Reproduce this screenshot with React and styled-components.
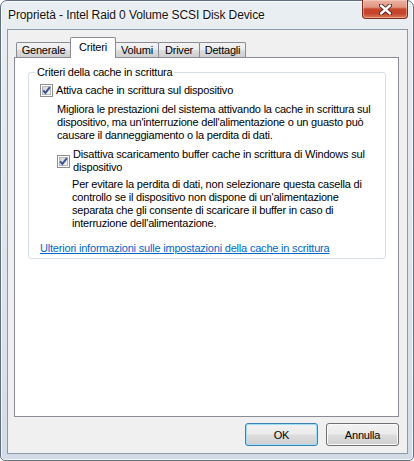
import * as React from "react"
import styled, { createGlobalStyle } from "styled-components"

const GlobalStyle = createGlobalStyle`
  html, body {
    margin: 0;
    padding: 0;
    background: #ffffff;
  }
  body {
    font-family: "Liberation Sans", Arial, sans-serif;
    font-size: 11px;
    letter-spacing: -0.2px;
    color: #000;
  }
`

const Window = styled.div`
  box-sizing: border-box;
  width: 414px;
  height: 461px;
  display: flex;
  flex-direction: column;
  padding: 0 5px 6px 6px;
  border: 1px solid #5f6e80;
  border-radius: 7px 7px 5px 5px;
  background: linear-gradient(180deg, #e9eef3 0%, #e2e8ee 35%, #dbe3ea 70%, #d3dce6 100%);
  box-shadow: inset 0 0 0 1px rgba(255, 255, 255, 0.75);
`

const TitleBar = styled.div`
  height: 28px;
  display: flex;
  align-items: flex-start;
`

const Title = styled.div`
  padding: 7px 0 0 1px;
  font-size: 12px;
  letter-spacing: -0.1px;
  line-height: 15px;
  color: #111;
  text-shadow: 0 0 6px #fff, 0 0 3px #fff;
`

const CloseButton = styled.div`
  margin-left: auto;
  margin-top: -1px;
  width: 46px;
  height: 19px;
  box-sizing: border-box;
  display: flex;
  align-items: center;
  justify-content: center;
  border: 1px solid #7a2c1e;
  border-top: none;
  border-radius: 0 0 4px 4px;
  background: linear-gradient(180deg, #eab2a4 0%, #e19680 40%, #c8472c 50%, #c4452b 75%, #dc7c58 100%);
  box-shadow: inset 0 0 0 1px rgba(255, 220, 205, 0.45);
`

const Client = styled.div`
  flex: 1;
  display: flex;
  flex-direction: column;
  padding: 7px 8px 7px 6px;
  border: 1px solid #8d9aab;
  background: #f0f0f0;
`

const TabStrip = styled.div`
  display: flex;
  align-items: flex-end;
  padding-left: 2px;
`

const Tab = styled.div`
  box-sizing: border-box;
  width: ${p => p.$w}px;
  height: ${p => (p.$active ? 21 : 15)}px;
  margin-left: -1px;
  margin-bottom: ${p => (p.$active ? -1 : 0)}px;
  padding-top: ${p => (p.$active ? 2 : 0)}px;
  position: relative;
  z-index: ${p => (p.$active ? 2 : 1)};
  border: 1px solid #898c95;
  border-bottom: none;
  border-radius: 2px 2px 0 0;
  background: ${p =>
    p.$active ? "#ffffff" : "linear-gradient(180deg, #f3f3f3 0%, #ebebeb 50%, #dddddd 51%, #cfcfcf 100%)"};
  text-align: center;
  line-height: 14px;
  &:first-child {
    margin-left: 0;
  }
`

const Panel = styled.div`
  flex: 1;
  display: flex;
  flex-direction: column;
  border: 1px solid #898c95;
  background: #ffffff;
`

const Group = styled.fieldset`
  margin: 8px 12px 0 13px;
  padding: 5px 10px 3px 11px;
  min-width: 0;
  border: 1px solid #d5dfe5;
  border-radius: 3px;
`

const Legend = styled.legend`
  margin-left: -5px;
  padding: 0 2px;
  line-height: 13px;
`

const CheckRow = styled.label`
  display: flex;
  align-items: center;
  gap: 3px;
  margin-left: ${p => p.$indent || 0}px;
  margin-top: ${p => p.$top || 0}px;
  line-height: 13px;
  white-space: nowrap;
`

const Text = styled.p`
  margin: ${p => p.$top || 0}px 0 0 ${p => p.$indent || 0}px;
  line-height: 13px;
  white-space: nowrap;
`

const Link = styled.a`
  display: block;
  margin-top: 12px;
  line-height: 13px;
  color: #0066cc;
  text-decoration: underline;
`

const ButtonRow = styled.div`
  display: flex;
  justify-content: flex-end;
  gap: 8px;
  margin-top: 6px;
`

const Button = styled.button`
  box-sizing: border-box;
  width: 73px;
  height: 23px;
  padding: 0;
  font-family: inherit;
  font-size: 11px;
  letter-spacing: -0.2px;
  color: #000;
  border: 1px solid ${p => (p.$primary ? "#3c7fb1" : "#707070")};
  border-radius: 3px;
  background: linear-gradient(180deg, #f2f2f2 0%, #ebebeb 49%, #dddddd 51%, #cfcfcf 100%);
  box-shadow: inset 0 0 0 1px ${p => (p.$primary ? "#9fe0f8" : "#fbfbfb")};
`

const CheckBox = () => (
  <svg width="13" height="13" viewBox="0 0 13 13" style={{ flex: "none" }}>
    <defs>
      <linearGradient id="cbfill" x1="0" y1="0" x2="1" y2="1">
        <stop offset="0" stopColor="#cdd2d8" />
        <stop offset="1" stopColor="#f6f7f8" />
      </linearGradient>
    </defs>
    <rect x="0.5" y="0.5" width="12" height="12" fill="#fff" stroke="#8e8f8f" />
    <rect x="2.5" y="2.5" width="8" height="8" fill="url(#cbfill)" stroke="#b4b9c0" />
    <path d="M3.2 6.4 L5.4 8.9 L9.9 3.2" fill="none" stroke="#3f528a" strokeWidth="1.9" />
  </svg>
)

const CloseGlyph = () => (
  <svg width="13" height="11" viewBox="0 0 13 11">
    <path d="M2 1.5 L11 9.5 M11 1.5 L2 9.5" stroke="#4a1a12" strokeWidth="4.2" strokeLinecap="round" />
    <path d="M2 1.5 L11 9.5 M11 1.5 L2 9.5" stroke="#ffffff" strokeWidth="2.4" strokeLinecap="round" />
  </svg>
)

const tabs = [
  { label: "Generale", w: 55 },
  { label: "Criteri", w: 46, active: true },
  { label: "Volumi", w: 44 },
  { label: "Driver", w: 42 },
  { label: "Dettagli", w: 47 },
]

const App = () => (
  <>
    <GlobalStyle />
    <Window>
      <TitleBar>
        <Title>Proprietà - Intel Raid 0 Volume SCSI Disk Device</Title>
        <CloseButton>
          <CloseGlyph />
        </CloseButton>
      </TitleBar>
      <Client>
        <TabStrip>
          {tabs.map(t => (
            <Tab key={t.label} $w={t.w} $active={t.active}>
              {t.label}
            </Tab>
          ))}
        </TabStrip>
        <Panel>
          <Group>
            <Legend>Criteri della cache in scrittura</Legend>
            <CheckRow>
              <CheckBox />
              <span>Attiva cache in scrittura sul dispositivo</span>
            </CheckRow>
            <Text $top={6} $indent={17}>
              Migliora le prestazioni del sistema attivando la cache in scrittura sul
              <br />
              dispositivo, ma un'interruzione dell'alimentazione o un guasto può
              <br />
              causare il danneggiamento o la perdita di dati.
            </Text>
            <CheckRow $indent={17} $top={6}>
              <CheckBox />
              <span>
                Disattiva scaricamento buffer cache in scrittura di Windows sul
                <br />
                dispositivo
              </span>
            </CheckRow>
            <Text $top={4} $indent={32}>
              Per evitare la perdita di dati, non selezionare questa casella di
              <br />
              controllo se il dispositivo non dispone di un'alimentazione
              <br />
              separata che gli consente di scaricare il buffer in caso di
              <br />
              interruzione dell'alimentazione.
            </Text>
            <Link href="#">Ulteriori informazioni sulle impostazioni della cache in scrittura</Link>
          </Group>
        </Panel>
        <ButtonRow>
          <Button $primary>OK</Button>
          <Button>Annulla</Button>
        </ButtonRow>
      </Client>
    </Window>
  </>
)

export default App
